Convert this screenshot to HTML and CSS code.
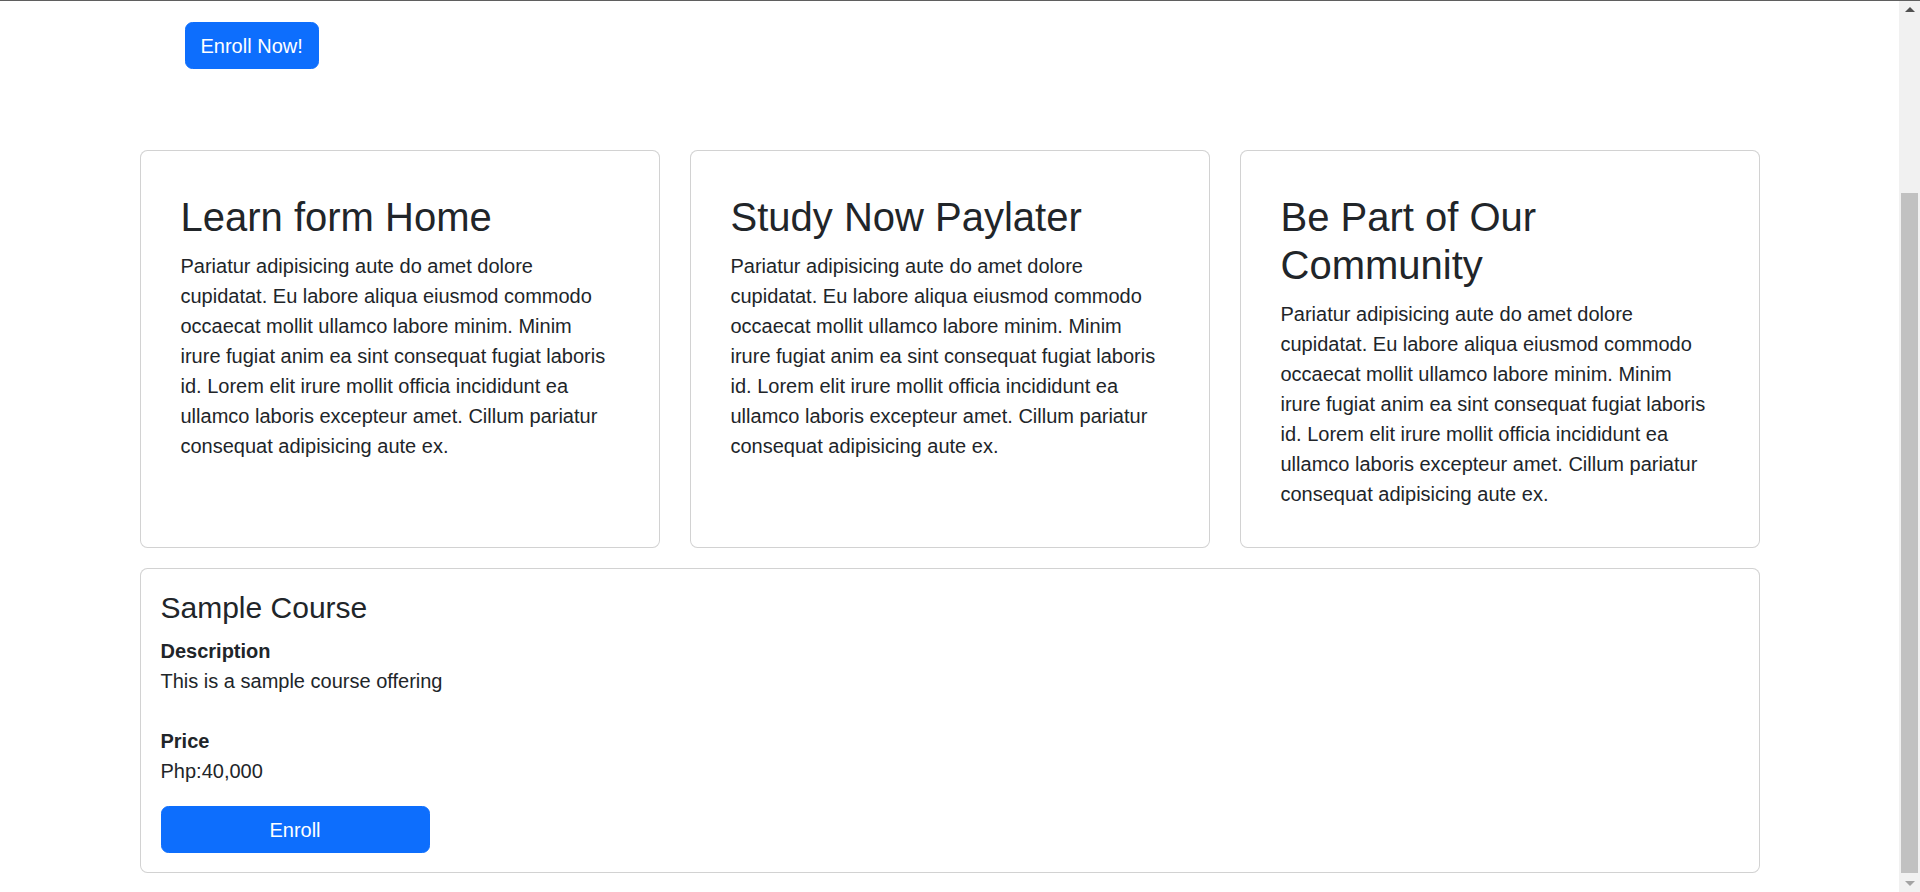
FILE: index.html
```html
<!DOCTYPE html>
<html lang="en">
<head>
<meta charset="utf-8">
<title>Courses</title>
<link rel="stylesheet" href="styles.css">
</head>
<body>
<div class="frame-line"></div>
<main class="page">
  <div class="container">
    <section class="hero">
      <button class="btn btn-primary">Enroll Now!</button>
    </section>

    <section class="highlights">
      <div class="card feature">
        <h2 class="feature-title">Learn form Home</h2>
        <p class="feature-text">Pariatur adipisicing aute do amet dolore cupidatat. Eu labore aliqua eiusmod commodo occaecat mollit ullamco labore minim. Minim irure fugiat anim ea sint consequat fugiat laboris id. Lorem elit irure mollit officia incididunt ea ullamco laboris excepteur amet. Cillum pariatur consequat adipisicing aute ex.</p>
      </div>
      <div class="card feature">
        <h2 class="feature-title">Study Now Paylater</h2>
        <p class="feature-text">Pariatur adipisicing aute do amet dolore cupidatat. Eu labore aliqua eiusmod commodo occaecat mollit ullamco labore minim. Minim irure fugiat anim ea sint consequat fugiat laboris id. Lorem elit irure mollit officia incididunt ea ullamco laboris excepteur amet. Cillum pariatur consequat adipisicing aute ex.</p>
      </div>
      <div class="card feature">
        <h2 class="feature-title">Be Part of Our Community</h2>
        <p class="feature-text">Pariatur adipisicing aute do amet dolore cupidatat. Eu labore aliqua eiusmod commodo occaecat mollit ullamco labore minim. Minim irure fugiat anim ea sint consequat fugiat laboris id. Lorem elit irure mollit officia incididunt ea ullamco laboris excepteur amet. Cillum pariatur consequat adipisicing aute ex.</p>
      </div>
    </section>

    <section class="card course">
      <h4 class="course-title">Sample Course</h4>
      <div class="course-label">Description</div>
      <p class="course-value">This is a sample course offering</p>
      <div class="course-label price-label">Price</div>
      <p class="course-value">Php:40,000</p>
      <button class="btn btn-primary btn-enroll">Enroll</button>
    </section>
  </div>
</main>
<div class="scrollbar">
  <div class="sb-arrow sb-up"></div>
  <div class="sb-track"><div class="sb-thumb"></div></div>
  <div class="sb-arrow sb-down"></div>
</div>
</body>
</html>
```

FILE: styles.css
```css
* { box-sizing: border-box; }

html, body {
  margin: 0;
  height: 100%;
  overflow: hidden;
  background: #fff;
}

body {
  font-family: "Liberation Sans", Arial, sans-serif;
  font-size: 20px;
  line-height: 30px;
  color: #212529;
}

.frame-line {
  position: fixed;
  top: 0;
  left: 0;
  right: 0;
  height: 1px;
  background: #5f5f5f;
  z-index: 10;
}

.page {
  width: calc(100% - 21px);
}

.container {
  width: 1620px;
  margin: 0 auto;
}

.hero {
  padding: 22px 0 0 45px;
  height: 150px;
}

.btn {
  font-family: inherit;
  font-size: 20px;
  line-height: 30px;
  padding: 7.5px 15px;
  border-radius: 7.5px;
  border: 1px solid transparent;
  cursor: pointer;
}

.btn-primary {
  background: #0d6efd;
  border-color: #0d6efd;
  color: #fff;
}

.card {
  border: 1px solid rgba(0, 0, 0, 0.175);
  border-radius: 7.5px;
  background: #fff;
}

.highlights {
  display: grid;
  grid-template-columns: repeat(3, 1fr);
  gap: 30px;
  margin-bottom: 20px;
}

.feature {
  padding: 42px 48px 38px 40px;
}

.feature-title {
  margin: 0 0 10px;
  font-size: 40px;
  line-height: 48px;
  font-weight: 400;
}

.feature-text {
  margin: 0;
}

.course {
  padding: 21px 20px 19px;
}

.course-title {
  margin: 0 0 10px;
  font-size: 30px;
  line-height: 36px;
  font-weight: 400;
}

.course-label {
  font-weight: 700;
}

.course-value {
  margin: 0;
}

.price-label {
  margin-top: 30px;
}

.btn-enroll {
  display: block;
  margin-top: 20px;
  width: 269px;
}

.scrollbar {
  position: fixed;
  top: 1px;
  right: 0;
  bottom: 0;
  width: 21px;
  background: #f1f1f1;
  display: flex;
  flex-direction: column;
}

.sb-arrow {
  height: 17px;
  display: flex;
  align-items: center;
  justify-content: center;
}

.sb-up::before {
  content: "";
  border-left: 5px solid transparent;
  border-right: 5px solid transparent;
  border-bottom: 5px solid #505050;
}

.sb-down::before {
  content: "";
  border-left: 5px solid transparent;
  border-right: 5px solid transparent;
  border-top: 5px solid #a3a3a3;
}

.sb-track {
  flex: 1;
  display: flex;
  flex-direction: column;
  justify-content: flex-end;
  padding: 0 2px 2px;
}

.sb-thumb {
  height: 680px;
  background: #c1c1c1;
}
```
